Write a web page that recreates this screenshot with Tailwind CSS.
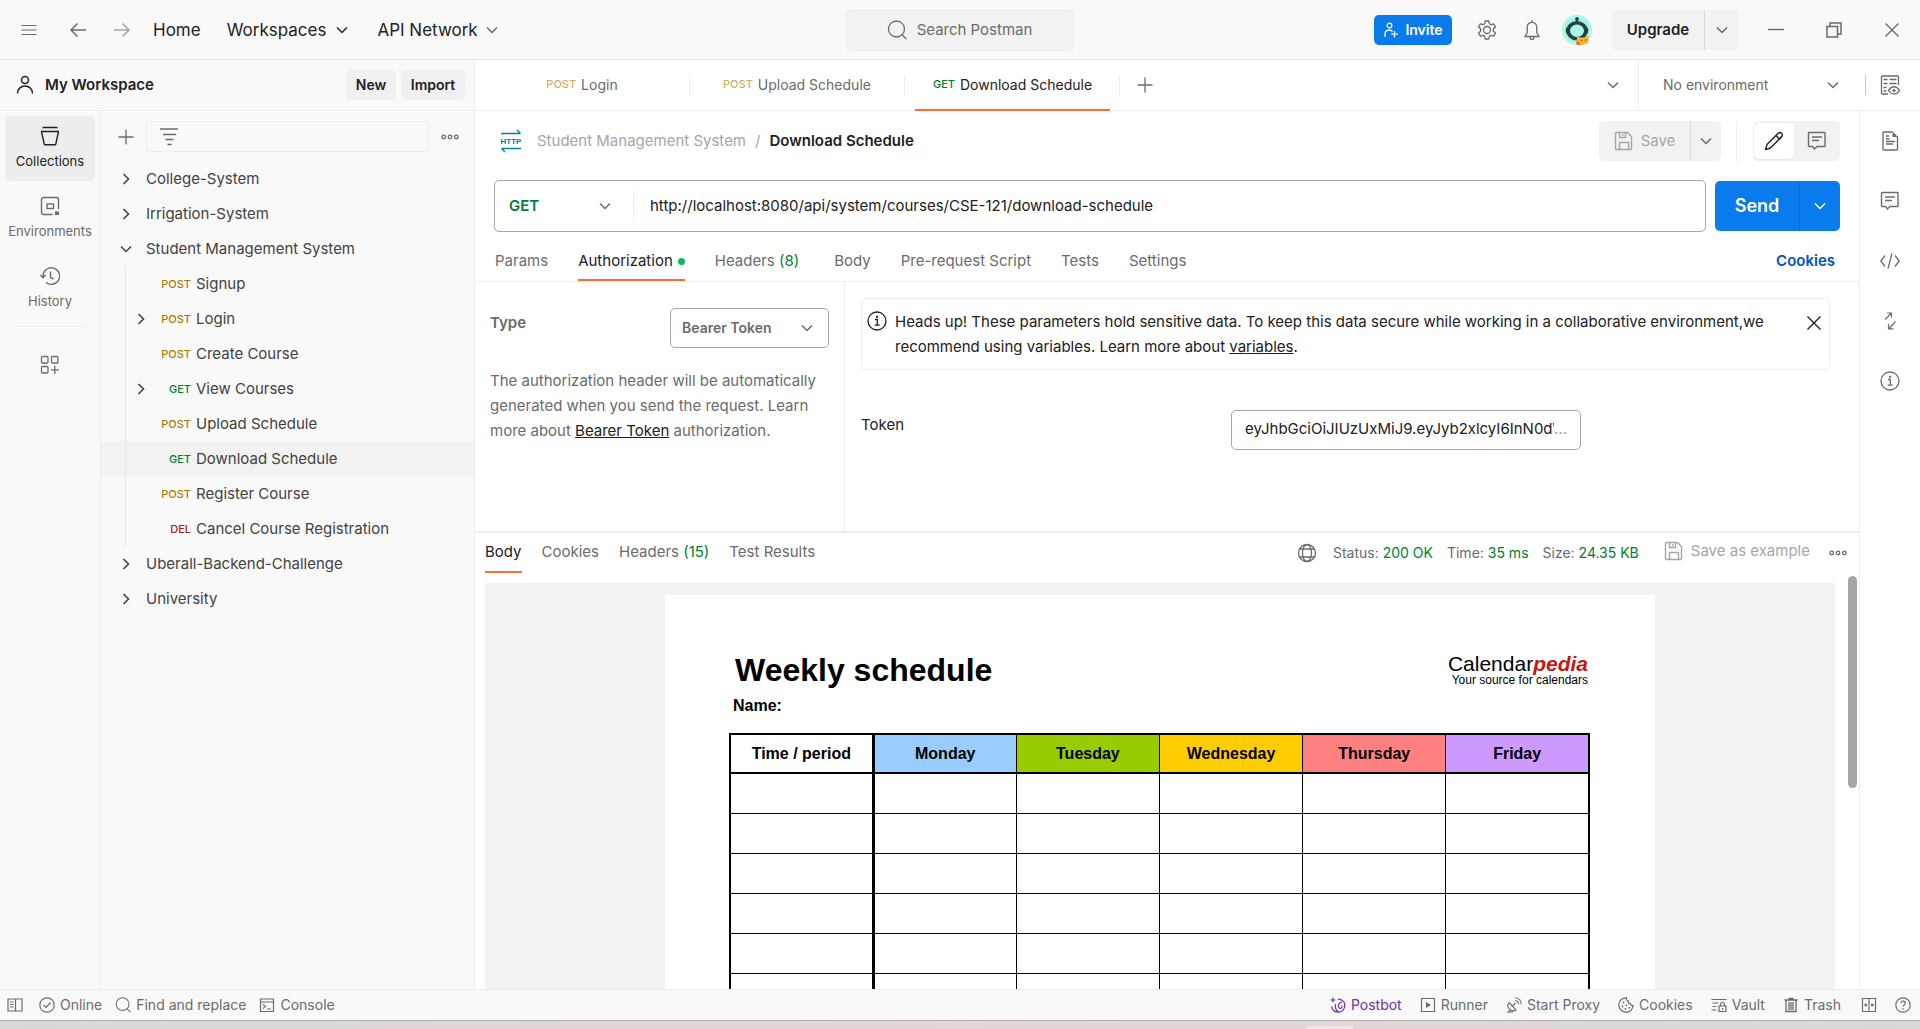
<!DOCTYPE html>
<html lang="en">
<head>
<meta charset="utf-8">
<meta name="viewport" content="width=device-width, initial-scale=1">
<title>Postman</title>
<script src="https://cdn.jsdelivr.net/npm/@tailwindcss/browser@4"></script>
</head>
<body class="h-screen overflow-hidden flex flex-col bg-[#f9f9f9] font-['Inter',sans-serif] text-[15px] leading-5 text-[#212121]">

<!-- Icon sprite -->
<svg class="hidden" aria-hidden="true">
  <symbol id="down" viewBox="0 0 14 14"><path d="M2 4.5l5 5 5-5" fill="none" stroke="currentColor" stroke-width="1.5"/></symbol>
  <symbol id="right" viewBox="0 0 14 14"><path d="M4.500 2l5 5-5 5" fill="none" stroke="currentColor" stroke-width="1.600"/></symbol>
  <symbol id="plus" viewBox="0 0 16 16"><path d="M8 0.500v15M0.500 8h15" fill="none" stroke="currentColor" stroke-width="1.300"/></symbol>
  <symbol id="dots" viewBox="0 0 18 8"><g fill="none" stroke="currentColor" stroke-width="1.300"><circle cx="2.700" cy="4" r="1.800"/><circle cx="9" cy="4" r="1.800"/><circle cx="15.300" cy="4" r="1.800"/></g></symbol>
  <symbol id="search" viewBox="0 0 20 20"><g fill="none" stroke="currentColor" stroke-width="1.300"><circle cx="9.500" cy="9" r="8"/><path d="M15.200 14.800l4 4.200"/></g></symbol>
  <symbol id="close" viewBox="0 0 16 16"><path d="M1.500 1.500l13 13M14.500 1.500l-13 13" fill="none" stroke="currentColor" stroke-width="1.400"/></symbol>
  <symbol id="save" viewBox="0 0 20 20"><g fill="none" stroke="currentColor" stroke-width="1.400"><path d="M2 1.500h11.500l4 4v12a1 1 0 0 1-1 1H2.500a1 1 0 0 1-1-1v-15a1 1 0 0 1 1-1z"/><path d="M5.500 1.500v5h6v-5M8.800 3v2M5.500 18.500v-7h9v7"/></g></symbol>
  <symbol id="comment" viewBox="0 0 20 20"><g fill="none" stroke="currentColor" stroke-width="1.400"><path d="M2 1.500h15.500a.5.5 0 0 1 .5.5v13a.5.5 0 0 1-.5.5H10l-2.500 2.500L5.500 15.500H2a.5.5 0 0 1-.5-.5V2a.5.5 0 0 1 .5-.5z"/><path d="M5 6h10M5 9.500h7"/></g></symbol>
  <symbol id="info" viewBox="0 0 20 20"><g fill="none" stroke="currentColor" stroke-width="1.300"><circle cx="10" cy="10" r="9"/><path d="M8 8.500h2.300v5.500M7.700 14.200h5"/></g><rect x="9" y="4.800" width="2" height="2" fill="currentColor"/></symbol>
</svg>

<!-- Title bar -->
<header class="h-[60px] shrink-0 border-b border-[#e6e6e6] grid grid-cols-[1fr_228px_1fr] items-center pr-5 pl-[19px]">
  <nav class="flex items-center text-[17px] text-[#212121]">
    <button aria-label="Menu" class="w-5 text-[#6b6b6b]"><svg class="size-5" viewBox="0 0 20 20"><path d="M2.500 5.500h15M2.500 10h15M2.500 14.500h15" fill="none" stroke="currentColor" stroke-width="1.200"/></svg></button>
    <button aria-label="Back" class="ml-[29px] text-[#6b6b6b]"><svg class="size-5" viewBox="0 0 20 20"><path d="M18 10H3M9.500 3.500L3 10l6.500 6.500" fill="none" stroke="currentColor" stroke-width="1.500"/></svg></button>
    <button aria-label="Forward" class="ml-6 text-[#a6a6a6]"><svg class="size-5" viewBox="0 0 20 20"><path d="M2 10h15M10.500 3.500L17 10l-6.500 6.500" fill="none" stroke="currentColor" stroke-width="1.500"/></svg></button>
    <a href="#" class="ml-[21px]">Home</a>
    <button class="ml-[26px] flex items-center gap-[9px]">Workspaces<svg class="size-3.5"><use href="#down"/></svg></button>
    <button class="ml-7 flex items-center gap-[7px]">API Network<svg class="size-3.5 text-[#6b6b6b]"><use href="#down"/></svg></button>
  </nav>
  <button class="h-[42px] rounded-[5px] border border-[#ededed] bg-[#f2f2f2] flex items-center justify-center gap-2.5 text-[#6b6b6b]"><svg class="size-5"><use href="#search"/></svg>Search Postman</button>
  <div class="flex items-center justify-end text-[#6b6b6b]">
    <button class="h-[30px] w-[78px] rounded-[5px] bg-[#097bed] text-white font-semibold text-sm flex items-center justify-center gap-1.5"><svg class="size-4" viewBox="0 0 16 16"><g fill="none" stroke="currentColor" stroke-width="1.300"><circle cx="6.500" cy="3.500" r="2.300"/><path d="M2 15v-2.500c0-5 5.500-5.500 7.500-3M11.500 9v6.500M8.200 12.200h6.600"/></g></svg>Invite</button>
    <button aria-label="Settings" class="ml-[25px]"><svg class="size-5" viewBox="0 0 20 20"><g fill="none" stroke="currentColor" stroke-width="1.300" stroke-linejoin="round"><path d="M8.200 1h3.600l.5 2.700 1.700 1L16.600 3.800l1.900 3.100-2.100 1.900v2.400l2.100 1.900-1.900 3.100-2.600-.9-1.700 1-.5 2.700H8.200l-.5-2.700-1.700-1-2.600.9-1.900-3.100 2.100-1.900V8.800L1.500 6.900l1.900-3.100 2.600.9 1.700-1z"/><circle cx="10" cy="10" r="3.500"/></g></svg></button>
    <button aria-label="Notifications" class="ml-[25px]"><svg class="size-5" viewBox="0 0 20 20"><g fill="none" stroke="currentColor" stroke-width="1.300"><path d="M10 2.300c-3 0-4.800 2.300-4.800 5.200v5L3 16.500h14l-2.200-4v-5C14.800 4.600 13 2.300 10 2.300zM10 0v2.300"/><path d="M8.300 16.800v1.500a1.700 1.300 0 0 0 3.400 0v-1.500"/></g></svg></button>
    <button aria-label="Account" class="ml-5"><svg class="size-[30px]" viewBox="0 0 30 30"><circle cx="15" cy="15" r="15" fill="#9ff5de"/><circle cx="15" cy="15" r="13.500" fill="none" stroke="#d4fbf1" stroke-width=".8"/><path d="M15 7V3.500" stroke="#24414a" stroke-width="1.500"/><circle cx="15" cy="4" r="1.900" fill="#24414a"/><ellipse cx="15" cy="15.800" rx="8.800" ry="8" fill="#a9f7e4" stroke="#24414a" stroke-width="3.600"/><rect x="3.800" y="12.500" width="3" height="6" rx="1.500" fill="#24414a"/><rect x="23.200" y="12.500" width="3" height="6" rx="1.500" fill="#24414a"/><path d="M15 20.500l2 2h5.500L26.500 20.500l.2 5c0 2-1.500 3.500-3.500 3.800L19 30l-4.500-.5z" fill="#ffb02e"/><path d="M14 27l3-.5 1 3.200-3 .3z" fill="#f5603a"/><circle cx="19.500" cy="25.300" r=".7" fill="#7a3b10"/><circle cx="23.500" cy="25" r=".7" fill="#7a3b10"/></svg></button>
    <div class="ml-5 h-10 flex rounded-[5px] bg-[#f2f2f2] text-[#212121]">
      <button class="w-[92px] font-semibold text-center">Upgrade</button>
      <button aria-label="Account options" class="w-[34px] border-l border-[#d9d9d9] flex items-center justify-center text-[#6b6b6b]"><svg class="size-3.5"><use href="#down"/></svg></button>
    </div>
    <button aria-label="Minimize" class="ml-7"><svg class="size-5" viewBox="0 0 20 20"><path d="M2 9.500h16" stroke="currentColor" stroke-width="1.400"/></svg></button>
    <button aria-label="Restore" class="ml-[38px]"><svg class="size-5" viewBox="0 0 20 20"><path d="M3 6.500h10.500V17H3zM6 6.500V3h11v11h-3.500" fill="none" stroke="currentColor" stroke-width="1.500"/></svg></button>
    <button aria-label="Close" class="ml-10"><svg class="size-4"><use href="#close"/></svg></button>
  </div>
</header>

<div class="flex flex-1 min-h-0">
  <!-- Sidebar -->
  <aside class="w-[475px] shrink-0 border-r border-[#ededed] flex flex-col">
    <div class="h-[51px] shrink-0 border-b border-[#ededed] flex items-center pl-[15px] pr-[9px]">
      <svg class="size-5" viewBox="0 0 20 20"><g fill="none" stroke="currentColor" stroke-width="1.500"><circle cx="10" cy="5" r="3.500"/><path d="M2.500 18.500c0-10 15-10 15 0"/></g></svg>
      <h1 class="ml-2.5 font-semibold">My Workspace</h1>
      <button class="ml-auto h-[30px] w-[50px] rounded-[5px] bg-[#f0f0f0] text-sm font-semibold">New</button>
      <button class="ml-[5px] h-[30px] w-16 rounded-[5px] bg-[#f0f0f0] text-sm font-semibold">Import</button>
    </div>
    <div class="flex flex-1 min-h-0">
      <nav class="w-[101px] shrink-0 border-r border-[#ededed] flex flex-col items-center pt-[5px] text-[13px] text-[#6b6b6b]">
        <button class="h-[65px] w-[90px] rounded-[5px] bg-[#ededed] text-[#212121] flex flex-col items-center justify-center gap-[5px]"><svg class="size-5" viewBox="0 0 20 20"><g fill="none" stroke="currentColor" stroke-width="1.400" stroke-linejoin="round"><path d="M2.500 1.500h15M1.500 5.500h17L15.800 18a1 1 0 0 1-1 .7H5.200a1 1 0 0 1-1-.7z"/></g></svg>Collections</button>
        <button class="mt-[5px] h-[65px] w-full flex flex-col items-center justify-center gap-[5px]"><svg class="size-5" viewBox="0 0 20 20"><g fill="none" stroke="currentColor" stroke-width="1.400"><path d="M12.500 18.500h-9a2 2 0 0 1-2-2v-13a2 2 0 0 1 2-2h13a2 2 0 0 1 2 2v9.500"/><rect x="7" y="8" width="6.500" height="4.500"/></g><rect x="15" y="15.500" width="4" height="3.500" fill="currentColor"/></svg>Environments</button>
        <button class="mt-[5px] h-[65px] w-full flex flex-col items-center justify-center gap-[5px]"><svg class="size-5" viewBox="0 0 20 20"><g fill="none" stroke="currentColor" stroke-width="1.400"><path d="M3 11V9.500a8.300 8.300 0 1 1 3 7M.5 9L3 11.800 5.800 9M10.500 5.500v6l3 1.500"/></g></svg>History</button>
        <hr class="mt-[5px] w-[70px] border-[#ededed]">
        <button aria-label="Configure sidebar" class="mt-7"><svg class="size-5" viewBox="0 0 20 20"><g fill="none" stroke="currentColor" stroke-width="1.300"><rect x="1.500" y="1.500" width="6.500" height="6.500" rx="1"/><rect x="11.500" y="1.500" width="6.500" height="6.500" rx="1"/><rect x="1.500" y="11.500" width="6.500" height="6.500" rx="1"/><path d="M14.800 10.800v8.200M10.800 14.900h8.200"/></g></svg></button>
      </nav>
      <div class="flex-1 min-w-0">
        <div class="flex items-center pl-[17px] pr-[15px] pt-2.5 text-[#6b6b6b]">
          <button aria-label="Create new"><svg class="size-4"><use href="#plus"/></svg></button>
          <label class="ml-3 mr-3 h-[31px] flex-1 min-w-0 border border-[#ededed] rounded-[3px] flex items-center pl-3">
            <svg class="size-5 shrink-0" viewBox="0 0 20 20"><path d="M1 2h18M4 7.500h13M6.500 12.500h8M8.500 17.500h4" fill="none" stroke="currentColor" stroke-width="1.500"/></svg>
            <input type="text" aria-label="Filter collections" class="flex-1 min-w-0 px-2 outline-none">
          </label>
          <button aria-label="More" class="flex"><svg class="h-2 w-[18px]"><use href="#dots"/></svg></button>
        </div>
        <ul class="pt-[9px] text-[#424242]">
          <li><button class="h-[35px] w-full flex items-center gap-[13px] pl-[18px]"><svg class="size-3.5"><use href="#right"/></svg>College-System</button></li>
          <li><button class="h-[35px] w-full flex items-center gap-[13px] pl-[18px]"><svg class="size-3.5"><use href="#right"/></svg>Irrigation-System</button></li>
          <li><button class="h-[35px] w-full flex items-center gap-[13px] pl-[18px]"><svg class="size-3.5"><use href="#down"/></svg>Student Management System</button>
            <ul class="relative">
              <li class="absolute left-6 inset-y-0 w-px bg-[#e6e6e6]" aria-hidden="true"></li>
              <li><button class="h-[35px] w-full flex items-center gap-[5px] pl-[33px]"><span class="w-[57px] text-right text-[11px] font-medium text-[#ad7a03]">POST</span>Signup</button></li>
              <li><button class="h-[35px] w-full flex items-center gap-[5px] pl-[33px]"><svg class="size-3.5 -mr-[5px]"><use href="#right"/></svg><span class="w-[43px] text-right text-[11px] font-medium text-[#ad7a03]">POST</span>Login</button></li>
              <li><button class="h-[35px] w-full flex items-center gap-[5px] pl-[33px]"><span class="w-[57px] text-right text-[11px] font-medium text-[#ad7a03]">POST</span>Create Course</button></li>
              <li><button class="h-[35px] w-full flex items-center gap-[5px] pl-[33px]"><svg class="size-3.5 -mr-[5px]"><use href="#right"/></svg><span class="w-[43px] text-right text-[11px] font-medium text-[#007f31]">GET</span>View Courses</button></li>
              <li><button class="h-[35px] w-full flex items-center gap-[5px] pl-[33px]"><span class="w-[57px] text-right text-[11px] font-medium text-[#ad7a03]">POST</span>Upload Schedule</button></li>
              <li class="bg-[#f2f2f2]"><button class="h-[35px] w-full flex items-center gap-[5px] pl-[33px]"><span class="w-[57px] text-right text-[11px] font-medium text-[#007f31]">GET</span>Download Schedule</button></li>
              <li><button class="h-[35px] w-full flex items-center gap-[5px] pl-[33px]"><span class="w-[57px] text-right text-[11px] font-medium text-[#ad7a03]">POST</span>Register Course</button></li>
              <li><button class="h-[35px] w-full flex items-center gap-[5px] pl-[33px]"><span class="w-[57px] text-right text-[11px] font-medium text-[#a6241c]">DEL</span>Cancel Course Registration</button></li>
            </ul>
          </li>
          <li><button class="h-[35px] w-full flex items-center gap-[13px] pl-[18px]"><svg class="size-3.5"><use href="#right"/></svg>Uberall-Backend-Challenge</button></li>
          <li><button class="h-[35px] w-full flex items-center gap-[13px] pl-[18px]"><svg class="size-3.5"><use href="#right"/></svg>University</button></li>
        </ul>
      </div>
    </div>
  </aside>

  <div class="flex-1 min-w-0 flex flex-col bg-white">
    <!-- Open tabs -->
    <div class="h-[51px] shrink-0 border-b border-[#ededed] flex items-center text-sm text-[#6b6b6b]">
      <div class="flex items-center h-full" role="tablist">
        <button role="tab" class="w-[215px] h-[21px] border-r border-[#ededed] flex items-center justify-center gap-[5px]"><span class="text-[11px] font-medium text-[#cfae66]">POST</span>Login</button>
        <button role="tab" class="w-[215px] h-[21px] border-r border-[#ededed] flex items-center justify-center gap-[5px]"><span class="text-[11px] font-medium text-[#cfae66]">POST</span>Upload Schedule</button>
        <div class="w-[215px] h-[51px] px-2.5 relative flex items-center">
          <button role="tab" aria-selected="true" class="w-full h-full border-y-2 border-t-transparent border-b-[#ff6c37] flex items-center justify-center gap-[5px] text-[#212121]"><span class="text-[11px] font-medium text-[#007f31]">GET</span>Download Schedule</button>
          <span class="absolute right-0 top-[15px] h-[21px] w-px bg-[#ededed]"></span>
        </div>
        <button aria-label="New tab" class="ml-[17px]"><svg class="size-4"><use href="#plus"/></svg></button>
      </div>
      <button aria-label="All tabs" class="ml-auto mr-[18px]"><svg class="size-3.5"><use href="#down"/></svg></button>
      <label class="h-full w-[220px] border-l border-[#ededed] flex items-center pl-6 pr-[18px]">
        <select aria-label="Environment" class="appearance-none flex-1 outline-none"><option>No environment</option></select>
        <svg class="size-3.5"><use href="#down"/></svg>
      </label>
      <button aria-label="Environment quick look" class="ml-[7px] pl-3.5 border-l border-[#c8c8c8] mr-5"><svg class="size-5" viewBox="0 0 20 20"><g fill="none" stroke="currentColor" stroke-width="1.300"><path d="M8 19H2.500a1 1 0 0 1-1-1V2a1 1 0 0 1 1-1h15a1 1 0 0 1 1 1v8M3.500 4.500h4M9.500 4.500h7M3.500 8.500h4M9.500 8.500h7M3.500 12.500h3M3.500 16h3"/><path d="M8.500 15.500c3-5 8-5 11 0-3 4.500-8 4.500-11 0z"/></g><circle cx="14" cy="15.500" r="1.600" fill="currentColor"/></svg></button>
    </div>

    <div class="flex flex-1 min-h-0">
      <main class="flex-1 min-w-0 flex flex-col">
        <!-- Request title and actions -->
        <div class="h-[60px] shrink-0 flex items-center pl-6 pr-[19px]">
          <svg class="h-6 w-6" viewBox="0 0 24 24" fill="none" stroke="#00839b" stroke-width="1.400"><path d="M2 4.500h19.500M18 1l3.500 3.500M22 19.500H2.500M6 23l-3.500-3.500"/><text x="12" y="15" text-anchor="middle" fill="#00839b" stroke="none" class="font-['Liberation_Sans',sans-serif] text-[8px] font-bold">HTTP</text></svg>
          <div class="ml-3.5 flex gap-[9px] mr-auto text-[#a6a6a6]"><a href="#">Student Management System</a><span>/</span><h2 class="font-semibold text-[#212121]">Download Schedule</h2></div>
          <div class="h-10 flex rounded-[5px] bg-[#f2f2f2] text-[#a6a6a6]">
            <button class="w-[91px] flex items-center justify-center gap-[7px]"><svg class="size-5"><use href="#save"/></svg>Save</button>
            <button aria-label="Save options" class="w-[31px] border-l border-[#d9d9d9] flex items-center justify-center text-[#6b6b6b]"><svg class="size-3.5"><use href="#down"/></svg></button>
          </div>
          <span class="mr-4 ml-[15px] h-10 w-px bg-[#ededed]"></span>
          <div class="h-10 w-[87px] rounded-[5px] bg-[#f2f2f2] flex items-center px-px">
            <button aria-label="Edit" class="h-9 w-10 rounded-[5px] bg-white shadow-xs flex items-center justify-center"><svg class="size-5" viewBox="0 0 20 20"><g fill="none" stroke="currentColor" stroke-width="1.400" stroke-linejoin="round"><path d="M1.500 18.500l1.500-5L14.200 2.300a2.300 2.300 0 0 1 3.500 3.300L6.500 17z"/><path d="M12 4.500l3.400 3.400 2-2"/></g></svg></button>
            <button aria-label="Comments" class="flex-1 flex justify-center text-[#6b6b6b]"><svg class="size-5"><use href="#comment"/></svg></button>
          </div>
        </div>

        <!-- URL bar -->
        <div class="shrink-0 pt-[9px] pl-[19px] pr-[19px] flex items-center gap-[9px]">
          <div class="h-[52px] flex-1 min-w-0 border border-[#a6a6a6] rounded-[5px] flex items-center">
            <label class="w-[139px] h-[30px] border-r border-[#ededed] flex items-center pl-3.5 pr-[21px] text-[#6b6b6b]">
              <select aria-label="Method" class="appearance-none flex-1 min-w-0 outline-none font-semibold text-[#007f31]"><option>GET</option></select>
              <svg class="size-3.5 shrink-0"><use href="#down"/></svg>
            </label>
            <input type="text" aria-label="Request URL" value="http://localhost:8080/api/system/courses/CSE-121/download-schedule" class="flex-1 min-w-0 h-full px-4 pb-0.5 outline-none">
          </div>
          <div class="h-[50px] flex rounded-[5px] bg-[#097bed] text-white">
            <button class="w-[84px] text-[18px] font-semibold">Send</button>
            <button aria-label="Send options" class="w-[41px] border-l border-[#0a6bcc] flex items-center justify-center"><svg class="size-3.5"><use href="#down"/></svg></button>
          </div>
        </div>

        <!-- Request sections -->
        <nav class="shrink-0 h-[50px] pt-3 border-b border-[#ededed] flex gap-[30px] pl-5 pr-6 text-[#6b6b6b]">
          <a href="#" class="h-[37px] leading-[33px]">Params</a>
          <a href="#" class="h-[37px] leading-[33px] border-b-2 border-[#ff6c37] text-[#212121] flex items-start gap-[5px]">Authorization<span class="mt-[14px] size-[7px] rounded-full bg-[#0cbb52]"></span></a>
          <a href="#" class="h-[37px] leading-[33px] mr-[5px]">Headers <span class="text-[#007f31]">(8)</span></a>
          <a href="#" class="h-[37px] leading-[33px]">Body</a>
          <a href="#" class="h-[37px] leading-[33px]">Pre-request Script</a>
          <a href="#" class="h-[37px] leading-[33px]">Tests</a>
          <a href="#" class="h-[37px] leading-[33px]">Settings</a>
          <a href="#" class="h-[37px] leading-[33px] ml-auto font-semibold text-[#0053b8]">Cookies</a>
        </nav>

        <!-- Authorization -->
        <section class="h-[249px] shrink-0 flex">
          <div class="w-[370px] shrink-0 border-r border-[#ededed] pl-[15px] pr-[15px] pt-[26px] text-[#6b6b6b]">
            <div class="flex items-start justify-between">
              <label for="auth-type" class="font-semibold leading-[30px]">Type</label>
              <div class="h-10 w-[159px] border border-[#a6a6a6] rounded-[5px] flex items-center pl-[11px] pr-3.5">
                <select id="auth-type" class="appearance-none flex-1 min-w-0 outline-none text-sm font-semibold"><option>Bearer Token</option></select>
                <svg class="size-3.5 shrink-0"><use href="#down"/></svg>
              </div>
            </div>
            <p class="mt-5 leading-[25px]">The authorization header will be automatically generated when you send the request. Learn more about <a href="#" class="underline text-[#212121]">Bearer Token</a> authorization.</p>
          </div>
          <div class="flex-1 min-w-0 pl-4 pt-4">
            <div class="mr-[29px] h-[72px] border border-[#ededed] rounded-[5px] flex pl-[5px] pr-[7px] pt-2.5">
              <svg class="size-5 shrink-0 mt-0.5"><use href="#info"/></svg>
              <p class="ml-2 flex-1 leading-[25px]">Heads up! These parameters hold sensitive data. To keep this data secure while working in a collaborative environment,we recommend using variables. Learn more about <a href="#" class="underline">variables</a>.</p>
              <button aria-label="Dismiss" class="ml-5 mt-1.5 self-start"><svg class="size-4"><use href="#close"/></svg></button>
            </div>
            <div class="mt-10 flex items-start">
              <label for="token" class="w-[370px] leading-[30px]">Token</label>
              <div class="h-10 w-[350px] border border-[#a6a6a6] rounded-[5px] flex items-center pl-[13px] pr-[13px] pb-0.5">
                <input id="token" type="text" value="eyJhbGciOiJIUzUxMiJ9.eyJyb2xlcyI6InN0dWRlbnQiXSwic3ViIjoi" class="flex-1 min-w-0 outline-none"><span class="text-[#a6a6a6]">...</span>
              </div>
            </div>
          </div>
        </section>

        <!-- Response -->
        <section class="flex-1 min-h-0 border-t-2 border-[#ededed] flex flex-col">
          <div class="h-10 shrink-0 flex pl-2.5 pr-3 gap-5 text-[#6b6b6b]">
            <a href="#" class="h-10 leading-[38px] border-b-2 border-[#ff6c37] text-[#212121]">Body</a>
            <a href="#" class="leading-[38px]">Cookies</a>
            <a href="#" class="leading-[38px]">Headers <span class="text-[#007f31]">(15)</span></a>
            <a href="#" class="leading-[38px]">Test Results</a>
            <div class="ml-auto flex items-center text-sm">
              <svg class="size-5" viewBox="0 0 20 20"><g fill="none" stroke="currentColor" stroke-width="1.300"><circle cx="10" cy="10" r="8.500"/><ellipse cx="10" cy="10" rx="4.500" ry="8.500"/><path d="M2.500 6h15M2.500 14h15"/></g></svg>
              <span class="ml-4">Status: <span class="text-[#007f31]">200 OK</span></span>
              <span class="ml-3.5">Time: <span class="text-[#007f31]">35 ms</span></span>
              <span class="ml-3.5">Size: <span class="text-[#007f31]">24.35 KB</span></span>
              <button class="ml-[25px] pb-1 flex items-center gap-[7px] text-[15px] text-[#a6a6a6]"><svg class="size-5"><use href="#save"/></svg>Save as example</button>
              <button aria-label="Response options" class="ml-[19px] flex"><svg class="h-2 w-[18px]"><use href="#dots"/></svg></button>
            </div>
          </div>
          <div class="flex-1 min-h-0 flex">
            <div class="mt-2.5 ml-2.5 mr-[13px] flex-1 min-w-0 overflow-hidden bg-[#f2f2f2] pt-3">
              <article class="mx-auto w-[990px] max-w-full h-[1400px] bg-white pl-16 pr-[65px] pt-[55px] font-['Liberation_Sans',sans-serif] text-black">
                <div class="flex justify-between">
                  <h3 class="text-[32px] leading-10 font-bold pl-1.5">Weekly schedule</h3>
                  <div class="pt-1 pr-0.5 text-right"><div class="text-[21px] leading-5">Calendar<span class="font-bold italic text-[#c81414]">pedia</span></div><div class="text-[12px] leading-3">Your source for calendars</div></div>
                </div>
                <p class="mt-1 pl-1 text-base leading-6 font-bold">Name:</p>
                <table class="mt-[15px] w-full table-fixed border-collapse border-2 border-black text-base leading-6">
                  <thead>
                    <tr class="h-[39px] border-b-2 border-black">
                      <th class="border-r-[3px] border-black">Time / period</th>
                      <th class="border-r border-black bg-[#99ccff]">Monday</th>
                      <th class="border-r border-black bg-[#99cc00]">Tuesday</th>
                      <th class="border-r border-black bg-[#ffcc00]">Wednesday</th>
                      <th class="border-r border-black bg-[#ff8080]">Thursday</th>
                      <th class="bg-[#cc99ff]">Friday</th>
                    </tr>
                  </thead>
                  <tbody class="divide-y divide-black">
                    <tr class="h-10"><td class="border-r-[3px] border-black"></td><td class="border-r border-black"></td><td class="border-r border-black"></td><td class="border-r border-black"></td><td class="border-r border-black"></td><td></td></tr>
                    <tr class="h-10"><td class="border-r-[3px] border-black"></td><td class="border-r border-black"></td><td class="border-r border-black"></td><td class="border-r border-black"></td><td class="border-r border-black"></td><td></td></tr>
                    <tr class="h-10"><td class="border-r-[3px] border-black"></td><td class="border-r border-black"></td><td class="border-r border-black"></td><td class="border-r border-black"></td><td class="border-r border-black"></td><td></td></tr>
                    <tr class="h-10"><td class="border-r-[3px] border-black"></td><td class="border-r border-black"></td><td class="border-r border-black"></td><td class="border-r border-black"></td><td class="border-r border-black"></td><td></td></tr>
                    <tr class="h-10"><td class="border-r-[3px] border-black"></td><td class="border-r border-black"></td><td class="border-r border-black"></td><td class="border-r border-black"></td><td class="border-r border-black"></td><td></td></tr>
                    <tr class="h-10"><td class="border-r-[3px] border-black"></td><td class="border-r border-black"></td><td class="border-r border-black"></td><td class="border-r border-black"></td><td class="border-r border-black"></td><td></td></tr>
                    <tr class="h-10"><td class="border-r-[3px] border-black"></td><td class="border-r border-black"></td><td class="border-r border-black"></td><td class="border-r border-black"></td><td class="border-r border-black"></td><td></td></tr>
                  </tbody>
                </table>
              </article>
            </div>
            <div class="mt-[3px] mr-0.5 h-[212px] w-[9px] rounded-full bg-[#a6a6a6]"></div>
          </div>
        </section>
      </main>

      <!-- Context bar -->
      <nav class="w-[61px] shrink-0 border-l border-[#ededed] flex flex-col items-center gap-10 pt-5 text-[#6b6b6b]">
        <button aria-label="Documentation"><svg class="size-5" viewBox="0 0 20 20"><g fill="none" stroke="currentColor" stroke-width="1.400"><path d="M12.500 1H4a1 1 0 0 0-1 1v16a1 1 0 0 0 1 1h12.500a1 1 0 0 0 1-1V5.500M6 5h3M6 8h3.500M6 10.500h9M6 13h7"/></g><path d="M12.500 0.500v5.500h5.500z" fill="currentColor"/></svg></button>
        <button aria-label="Comments"><svg class="size-5"><use href="#comment"/></svg></button>
        <button aria-label="Code"><svg class="size-5" viewBox="0 0 20 20"><path d="M5 4.500L.8 10 5 15.500M15 4.500l4.200 5.500-4.200 5.500M12 2.500l-4 15" fill="none" stroke="currentColor" stroke-width="1.300"/></svg></button>
        <button aria-label="Related requests"><svg class="size-5" viewBox="0 0 20 20"><path d="M5 8.500l6.500-6.500M7 2h4.500v4.500M15.500 10.500L9 17.500M8.500 13v4.800h5" fill="none" stroke="currentColor" stroke-width="1.200"/></svg></button>
        <button aria-label="Info"><svg class="size-5"><use href="#info"/></svg></button>
      </nav>
    </div>
  </div>
</div>

<!-- Status bar -->
<footer class="h-[31px] shrink-0 border-t border-[#ededed] flex items-center pl-[7px] pr-[9px] text-sm text-[#6b6b6b]">
  <button aria-label="Toggle sidebar"><svg class="size-4" viewBox="0 0 16 16"><path d="M1 2h14v12H1zM8.500 2v12M3 5h3.500M3 7.500h3.500M3 10h3.500" fill="none" stroke="currentColor" stroke-width="1.200"/></svg></button>
  <button class="ml-4 flex items-center gap-[5px]"><svg class="size-4" viewBox="0 0 16 16"><g fill="none" stroke="currentColor" stroke-width="1.200"><circle cx="8" cy="8" r="7.200"/><path d="M4.500 8l2.500 2.500 4.500-5"/></g></svg>Online</button>
  <button class="ml-[13px] flex items-center gap-[5px]"><svg class="size-4"><use href="#search"/></svg>Find and replace</button>
  <button class="ml-[13px] flex items-center gap-[5px]"><svg class="size-4" viewBox="0 0 16 16"><path d="M1.500 2h13v12.500h-13zM1.500 5h13M4 7.500l2.500 2L4 11.500M8 12h4" fill="none" stroke="currentColor" stroke-width="1.200"/></svg>Console</button>
  <div class="ml-auto flex items-center gap-[18px]">
    <button class="flex items-center gap-[5px] text-[#6b30ab]"><svg class="size-4" viewBox="0 0 16 16"><g fill="none" stroke="currentColor" stroke-width="1.200"><path d="M8 2.200c4 0 6.800 2.500 6.800 6.300 0 4-3 6.700-6.500 6.700S2.300 13 1.500 9.500M3 .5v5M.5 3h5M5.500 7c-1 3 .5 6.500 3 8"/><path d="M12 5c-3 .5-4.500 3.500-3.200 5.500s4 .5 3-2"/></g></svg>Postbot</button>
    <button class="flex items-center gap-[5px]"><svg class="size-4" viewBox="0 0 16 16"><path d="M1.500 1.500h13v13h-13z" fill="none" stroke="currentColor" stroke-width="1.200"/><path d="M6 5l5 3-5 3z" fill="currentColor"/></svg>Runner</button>
    <button class="flex items-center gap-[5px]"><svg class="size-4" viewBox="0 0 16 16"><path d="M3 5.500c-3.500 4 2 10.500 7 7.500zM6.500 9l3-3M9 3.700c2 0 3.500 1.500 3.500 3.500M9 1c3.700 0 6.200 2.500 6.200 6.200M4 13.500L2 15h5" fill="none" stroke="currentColor" stroke-width="1.100"/></svg>Start Proxy</button>
    <button class="flex items-center gap-[5px]"><svg class="size-4" viewBox="0 0 16 16"><path d="M8.500.8A7.200 7.200 0 1 0 15.200 8.500c-1.500.3-2.700-.5-2.700-2-2 .2-2.500-1-2-2.300-1.700-.2-2.500-1.700-2-3.400z" fill="none" stroke="currentColor" stroke-width="1.200"/><g fill="currentColor"><circle cx="5.500" cy="5.500" r=".9"/><circle cx="4.500" cy="9.500" r=".9"/><circle cx="8.300" cy="8.300" r=".9"/><circle cx="7.500" cy="12" r=".9"/><circle cx="11.300" cy="10.800" r=".9"/></g></svg>Cookies</button>
    <button class="flex items-center gap-[5px]"><svg class="size-4" viewBox="0 0 16 16"><path d="M.5 2.500h15M1.500 6h6M1.500 9.500h4M.5 13h5M8 9h7v5.500H8zM9.500 9V7.500a2 2 0 0 1 4 0V9M11.500 11v2" fill="none" stroke="currentColor" stroke-width="1.200"/></svg>Vault</button>
    <button class="mr-0.5 flex items-center gap-[5px]"><svg class="size-4" viewBox="0 0 16 16"><path d="M1.500 3h13M5.500 1.500h5M3 3v11.500h10V3M6 5v8M8 5v8M10 5v8" fill="none" stroke="currentColor" stroke-width="1.300"/></svg>Trash</button>
    <button aria-label="Two pane view"><svg class="size-4" viewBox="0 0 16 16"><path d="M1.500 1.500h13v13h-13zM8 1.500v13" fill="none" stroke="currentColor" stroke-width="1.200"/><path d="M3.500 6.800h2.500v2.400H3.500zM10 6.800h2.500v2.400H10z" fill="currentColor"/></svg></button>
    <button aria-label="Help"><svg class="size-4" viewBox="0 0 16 16"><g fill="none" stroke="currentColor" stroke-width="1.200"><circle cx="8" cy="8" r="7.200"/><path d="M5.800 6.300c0-3 4.500-2.800 4.500 0 0 1.500-2.300 1.700-2.300 3.500M8 11v1.500"/></g></svg></button>
  </div>
</footer>

<!-- Desktop edge below the window -->
<div class="h-[9px] shrink-0 border-t border-[#adadad] bg-linear-to-r from-[#d9d9d9] via-[#e8d5d5] to-[#d9d9d9] flex"><span class="mt-[5px] ml-[68%] h-[3px] w-12 rounded-t-[3px] bg-[#efe6e6]"></span></div>
</body>
</html>
